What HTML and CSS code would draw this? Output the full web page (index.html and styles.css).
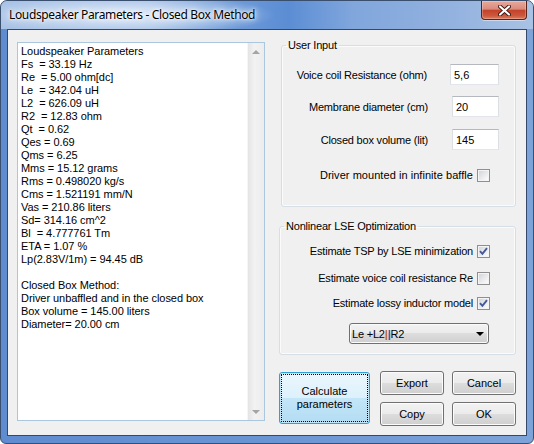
FILE: index.html
```html
<!DOCTYPE html>
<html>
<head>
    <meta name="viewport" content="width=device-width, initial-scale=1">
    <link rel="stylesheet" href="styles.css">
</head>
<body>
    <div class="window">
        <div class="titlebar">
            <span class="caption">Loudspeaker Parameters - Closed Box Method</span>
            <button class="close" title="Close">
                <svg width="13" height="11" viewBox="0 0 13 11">
                    <path d="M2 1.5 L11 9.5 M11 1.5 L2 9.5" stroke="#3b1a16" stroke-width="4" stroke-linecap="round"/>
                    <path d="M2 1.5 L11 9.5 M11 1.5 L2 9.5" stroke="#fff" stroke-width="2.2" stroke-linecap="round"/>
                </svg>
            </button>
        </div>

        <div class="client">
            <!-- Results memo -->
            <div class="memo">
                <div class="memo-text">Loudspeaker Parameters
Fs  = 33.19 Hz
Re  = 5.00 ohm[dc]
Le  = 342.04 uH
L2  = 626.09 uH
R2  = 12.83 ohm
Qt  = 0.62
Qes = 0.69
Qms = 6.25
Mms = 15.12 grams
Rms = 0.498020 kg/s
Cms = 1.521191 mm/N
Vas = 210.86 liters
Sd= 314.16 cm^2
Bl  = 4.777761 Tm
ETA = 1.07 %
Lp(2.83V/1m) = 94.45 dB

Closed Box Method:
Driver unbaffled and in the closed box
Box volume = 145.00 liters
Diameter= 20.00 cm</div>
                <div class="vscroll">
                    <span class="arrow-up"></span>
                    <span class="arrow-down"></span>
                </div>
            </div>

            <div class="side">
                <fieldset class="group group-input">
                    <legend>User Input</legend>
                    <div class="field field-first">
                        <label for="re">Voice coil Resistance (ohm)</label>
                        <input id="re" class="wide" value="5,6">
                    </div>
                    <div class="field field-second">
                        <label for="diam">Membrane diameter (cm)</label>
                        <input id="diam" value="20">
                    </div>
                    <div class="field">
                        <label for="vol">Closed box volume (lit)</label>
                        <input id="vol" value="145">
                    </div>
                    <div class="check-row baffle">
                        <span>Driver mounted in infinite baffle</span>
                        <span class="check"></span>
                    </div>
                </fieldset>

                <fieldset class="group group-lse">
                    <legend>Nonlinear LSE Optimization</legend>
                    <div class="check-row tsp">
                        <span>Estimate TSP by LSE minimization</span>
                        <span class="check checked">
                            <svg width="9" height="9" viewBox="0 0 9 9"><path d="M1 4.2 L3.4 6.8 L8 1.2" fill="none" stroke="#42599a" stroke-width="1.9"/></svg>
                        </span>
                    </div>
                    <div class="check-row recoil">
                        <span>Estimate voice coil resistance Re</span>
                        <span class="check"></span>
                    </div>
                    <div class="check-row lossy">
                        <span>Estimate lossy inductor model</span>
                        <span class="check checked">
                            <svg width="9" height="9" viewBox="0 0 9 9"><path d="M1 4.2 L3.4 6.8 L8 1.2" fill="none" stroke="#42599a" stroke-width="1.9"/></svg>
                        </span>
                    </div>
                    <div class="combo">
                        <span class="combo-text">Le +L2<span class="bar-a">|</span><span class="bar-b">|</span>R2</span>
                        <span class="combo-arrow"></span>
                    </div>
                </fieldset>

                <div class="actions">
                    <button class="btn btn-calc">Calculate<br>parameters</button>
                    <div class="btn-grid">
                        <button class="btn">Export</button>
                        <button class="btn">Cancel</button>
                        <button class="btn">Copy</button>
                        <button class="btn">OK</button>
                    </div>
                </div>
            </div>
        </div>
    </div>
</body>
</html>
```

FILE: styles.css
```css
/* Page and window frame */
body {
    margin: 0;
    background: #fff;
    font-family: "Liberation Sans", Arial, sans-serif;
    font-size: 11px;
    letter-spacing: -0.2px;
    color: #000;
}

.window {
    width: 534px;
    height: 444px;
    box-sizing: border-box;
    border: 1px solid #3a4f6e;
    border-radius: 7px 7px 6px 6px;
    overflow: hidden;
    display: flex;
    flex-direction: column;
    background: linear-gradient(90deg, #5f8bd0 0%, #6a95d4 50%, #7ea3d9 100%);
}

/* Title bar */
.titlebar {
    height: 28px;
    flex: none;
    display: flex;
    justify-content: space-between;
    align-items: flex-start;
    background:
        radial-gradient(ellipse 150px 20px at 125px 14px, rgba(232, 241, 251, 0.95), rgba(232, 241, 251, 0)),
        linear-gradient(90deg, #a9c3e6 0%, #9fbce5 28%, #6e9bd8 44%, #5b8dd4 54%, #80a6dc 66%, #93b2df 85%, #a9c2e4 100%);
}

.caption {
    margin-left: 8px;
    line-height: 28px;
    font-family: "Noto Sans", "Open Sans", sans-serif;
    font-size: 12px;
    letter-spacing: -0.35px;
    color: #000;
    text-shadow: 0 0 8px #fff, 0 0 5px #fff, 0 0 2px #fff;
}

.close {
    width: 46px;
    height: 19px;
    margin-right: 6px;
    padding: 0;
    border: 1px solid #5a2219;
    border-top: none;
    border-radius: 0 0 4px 4px;
    background: linear-gradient(#e8a99c 0%, #d98b7c 45%, #c4432a 52%, #cc563c 80%, #de7a5c 100%);
    box-shadow: inset 0 0 0 1px rgba(255, 255, 255, 0.25), 0 1px 0 rgba(255, 255, 255, 0.45);
    display: flex;
    align-items: center;
    justify-content: center;
}

/* Client area */
.client {
    height: 407px;
    margin: 0 6px;
    box-sizing: border-box;
    border: 1px solid #34486a;
    background: #f0f0f0;
    display: flex;
    align-items: flex-start;
    padding-left: 9px;
}

/* Memo with disabled scrollbar */
.memo {
    margin-top: 12px;
    width: 248px;
    height: 379px;
    box-sizing: border-box;
    border: 1px solid #abc6df;
    background: #fff;
    display: flex;
}

.memo-text {
    flex: 1;
    padding: 2px 0 0 3px;
    white-space: pre;
    line-height: 13px;
    letter-spacing: -0.05px;
    overflow: hidden;
}

.vscroll {
    width: 17px;
    background: linear-gradient(90deg, #e4e4e4, #f2f2f2 40%, #ececec);
    border-left: 1px solid #f6f6f6;
    display: flex;
    flex-direction: column;
    justify-content: space-between;
    align-items: center;
    padding: 7px 0 6px;
    box-sizing: border-box;
}

.arrow-up,
.arrow-down {
    width: 0;
    height: 0;
    border-left: 4px solid transparent;
    border-right: 4px solid transparent;
}

.arrow-up {
    border-bottom: 4px solid #a4a4a4;
}

.arrow-down {
    border-top: 4px solid #a4a4a4;
}

/* Right column */
.side {
    margin-left: 14px;
    width: 237px;
    display: flex;
    flex-direction: column;
}

.group {
    margin: 0;
    padding: 0 0 0 4px;
    box-sizing: border-box;
    border: 1px solid #d5dfe5;
    border-radius: 3px;
    box-shadow: inset 0 0 0 1px #fbfbfb;
    display: flex;
    flex-direction: column;
    align-items: flex-end;
}

.group legend {
    padding: 0 2px;
    line-height: 13px;
}

.group-input {
    margin: 9px 0 0 2px;
    width: 235px;
    height: 168px;
}

.group-lse {
    margin-top: 13px;
    width: 237px;
    height: 135px;
}

.field {
    display: flex;
    align-items: center;
    gap: 24px;
    margin: 12px 16px 0 0;
    height: 21px;
}

.field label {
    padding-top: 1px;
}

.field-first {
    margin-top: 12px;
    gap: 23px;
}

.field-second {
    margin-top: 11px;
}

.field input {
    width: 47px;
    height: 21px;
    box-sizing: border-box;
    border: 1px solid;
    border-color: #b5b8be #dcdfe4 #e3e7ec #dcdfe4;
    padding: 0 3px;
    font: inherit;
    background: #fff;
    color: #000;
}

.field input.wide {
    width: 49px;
}

.check-row {
    display: flex;
    align-items: center;
    gap: 4px;
    height: 13px;
    line-height: 13px;
    margin-right: 25px;
}

.baffle {
    margin-top: 19px;
    letter-spacing: 0.05px;
}

.tsp {
    margin-top: 12px;
}

.recoil {
    margin-top: 14px;
}

.lossy {
    margin-top: 12px;
}

.check {
    width: 13px;
    height: 13px;
    box-sizing: border-box;
    border: 1px solid #8f8f8f;
    background: linear-gradient(135deg, #cfd2d6 0%, #f9f9f9 85%);
    box-shadow: inset 0 0 0 1px #f4f4f4;
    display: flex;
    align-items: center;
    justify-content: center;
}

.check svg {
    display: block;
}

/* Drop-down list */
.combo {
    margin: 13px 26px 0 0;
    width: 140px;
    height: 21px;
    box-sizing: border-box;
    border: 1px solid #707070;
    border-radius: 3px;
    background: linear-gradient(#f2f2f2 0%, #ebebeb 50%, #dddddd 50%, #cfcfcf 100%);
    box-shadow: inset 0 0 0 1px #fbfbfb;
    display: flex;
    align-items: center;
    justify-content: space-between;
    padding: 0 4px 0 2px;
}

.bar-a {
    color: #b5651d;
    font-weight: bold;
}

.bar-b {
    color: #2a58b0;
    font-weight: bold;
}

.combo-arrow {
    width: 0;
    height: 0;
    border-left: 4px solid transparent;
    border-right: 4px solid transparent;
    border-top: 4px solid #000;
}

/* Buttons */
.actions {
    margin-top: 16px;
    display: flex;
    align-items: flex-start;
    gap: 10px;
}

.btn {
    font: inherit;
    color: #000;
    padding: 0;
    border: 1px solid #707070;
    border-radius: 3px;
    background: linear-gradient(#f2f2f2 0%, #ebebeb 50%, #dddddd 50%, #cfcfcf 100%);
    box-shadow: inset 0 0 0 1px #fcfcfc;
    line-height: 13px;
}

.btn-calc {
    margin-top: 1px;
    width: 91px;
    height: 52px;
    border-color: #2f9fd8;
    background: linear-gradient(#eaf6fd 0%, #ddf1fc 50%, #c4e6f8 50%, #b2dcf3 100%);
    box-shadow: inset 0 0 0 1px #bfe6f8;
    outline: 1px dotted #000;
    outline-offset: -3px;
}

.btn-grid {
    display: grid;
    grid-template-columns: 64px 64px;
    grid-auto-rows: 24px;
    column-gap: 8px;
    row-gap: 7px;
}
```
